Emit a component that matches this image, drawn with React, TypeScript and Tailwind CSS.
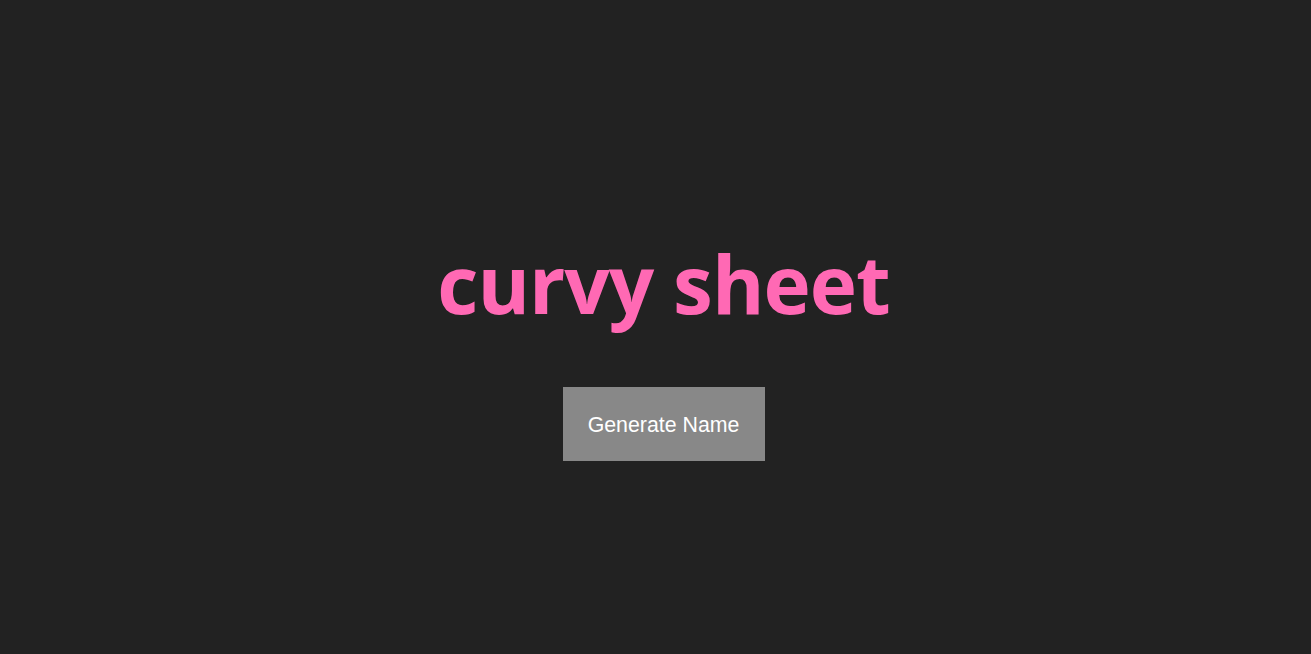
const App = () => {
  return (
    <main className="flex min-h-screen flex-col items-center justify-center bg-[#222222] pl-[16px] pt-[50px]">
      <h1 className="font-['Open_Sans','Noto_Sans',sans-serif] text-[80px] font-bold leading-none tracking-[-1px] text-[#ff69b4]">
        curvy sheet
      </h1>
      <button className="mt-[64px] h-[74px] w-[202px] bg-[#888888] pt-[3px] font-['Liberation_Sans',Arial,sans-serif] text-[21.33px] text-white">
        Generate Name
      </button>
    </main>
  )
}

export default App
